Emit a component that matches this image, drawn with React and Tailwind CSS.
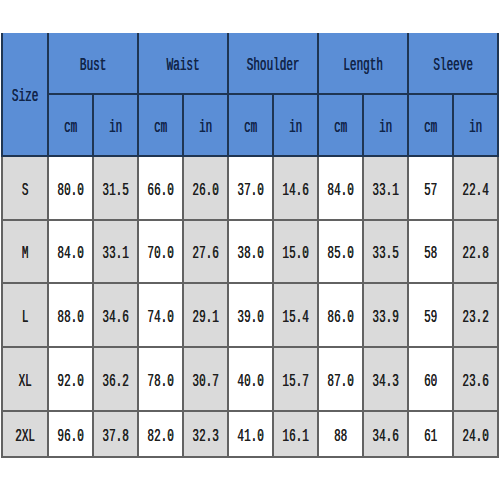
import React from 'react';

const groups = ['Bust', 'Waist', 'Shoulder', 'Length', 'Sleeve'];

const rows = [
  { size: 'S', h: 'h-[62px]', values: ['80.0', '31.5', '66.0', '26.0', '37.0', '14.6', '84.0', '33.1', '57', '22.4'] },
  { size: 'M', h: 'h-[61px]', values: ['84.0', '33.1', '70.0', '27.6', '38.0', '15.0', '85.0', '33.5', '58', '22.8'] },
  { size: 'L', h: 'h-[62px]', values: ['88.0', '34.6', '74.0', '29.1', '39.0', '15.4', '86.0', '33.9', '59', '23.2'] },
  { size: 'XL', h: 'h-[62px]', values: ['92.0', '36.2', '78.0', '30.7', '40.0', '15.7', '87.0', '34.3', '60', '23.6'] },
  { size: '2XL', h: 'h-[44px]', values: ['96.0', '37.8', '82.0', '32.3', '41.0', '16.1', '88', '34.6', '61', '24.0'] },
];

// tall narrow glyphs like the original chart font
const Txt = ({ children }) => (
  <span className="inline-block translate-y-[2px] scale-y-[1.7] text-[11px] leading-none [text-shadow:0.3px_0_0_currentColor]">
    {children}
  </span>
);

const App = () => {
  return (
    <div
      className="w-[500px] h-[500px] bg-white pt-[33px] pl-[1px]"
      style={{ fontFamily: '"Liberation Mono", "Courier New", monospace' }}
    >
      <div className="w-[498px]">
        {/* Header */}
        <div className="grid grid-cols-[44px_repeat(10,1fr)] grid-rows-[60px_60px] gap-[2px] bg-[#1f3552] px-[2px] pb-[2px] text-[#102448]">
          <div className="row-span-2 flex items-center justify-center bg-[#5b8ed6]">
            <Txt>Size</Txt>
          </div>
          {groups.map((g) => (
            <div key={g} className="col-span-2 flex items-center justify-center bg-[#5b8ed6]">
              <Txt>{g}</Txt>
            </div>
          ))}
          {groups.map((g) => (
            <React.Fragment key={g + '-units'}>
              <div className="flex items-center justify-center bg-[#5b8ed6]">
                <Txt>cm</Txt>
              </div>
              <div className="flex items-center justify-center bg-[#5b8ed6]">
                <Txt>in</Txt>
              </div>
            </React.Fragment>
          ))}
        </div>

        {/* Data rows */}
        <div className="grid grid-cols-[44px_repeat(10,1fr)] gap-[2px] bg-[#626262] px-[2px] pb-[2px] text-[#1e1e1e]">
          {rows.map((row) => (
            <React.Fragment key={row.size}>
              <div className={`${row.h} flex items-center justify-center bg-[#dadada]`}>
                <Txt>{row.size}</Txt>
              </div>
              {row.values.map((v, i) => (
                <div
                  key={i}
                  className={`${row.h} flex items-center justify-center ${i % 2 === 0 ? 'bg-white' : 'bg-[#dadada]'}`}
                >
                  <Txt>{v}</Txt>
                </div>
              ))}
            </React.Fragment>
          ))}
        </div>
      </div>
    </div>
  );
};

export default App;
